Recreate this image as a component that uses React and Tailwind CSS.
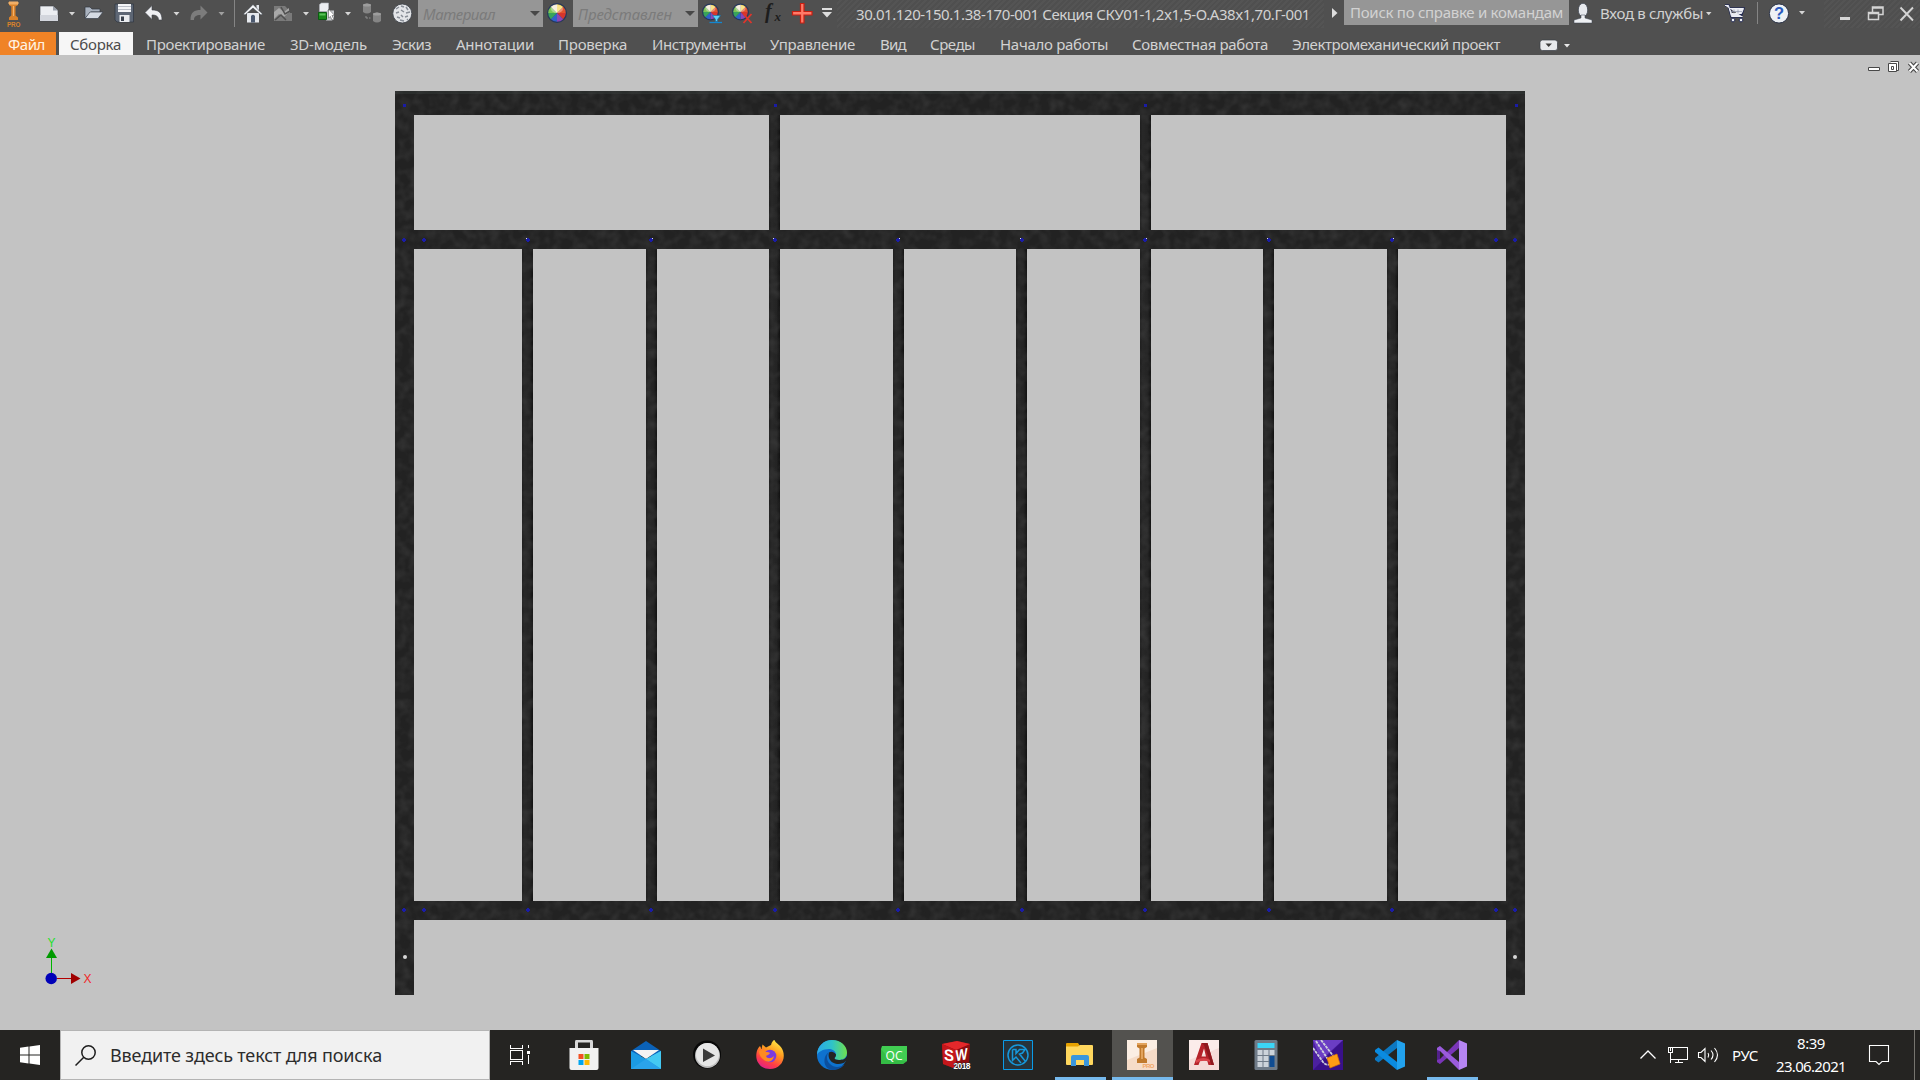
import React, { useLayoutEffect, useRef } from 'react';

const UI = "font-['Noto_Sans','Open_Sans',sans-serif]";

/* Single line of text whose tracking is adjusted to fill a given width. */
function FitText({ w, className = '', children }) {
  const box = useRef(null);
  useLayoutEffect(() => {
    const el = box.current;
    el.style.letterSpacing = '0px';
    const natural = el.getBoundingClientRect().width;
    const n = String(children).length;
    el.style.letterSpacing = (w - natural) / n + 'px';
  }, [w, children]);
  return (
    <span className={'block shrink-0 whitespace-pre ' + className} style={{ width: w }}>
      <span ref={box} className="inline-block">{children}</span>
    </span>
  );
}

/* Toolbar slot: a strip of the title bar drawn in window coordinates. */
function Slot({ x, w, h = 32, y = 0, children }) {
  return (
    <svg className="block shrink-0" width={w} height={h} viewBox={`${x} ${y} ${w} ${h}`}>
      {children}
    </svg>
  );
}

const Caret = ({ x, y = 12, s = 6, fill = '#d6d6d6' }) => (
  <path d={`M${x} ${y}h${s}l${-s / 2} ${s / 2 + 0.5}z`} fill={fill} />
);

const Ball = ({ cx, cy, r }) => {
  const cols = ['#f6d44a', '#e2542f', '#d6362c', '#8b46b5', '#2f62c9', '#38a35c', '#7cc455', '#f3ead0'];
  return (
    <g>
      <circle cx={cx} cy={cy} r={r} fill="#26375c" />
      {cols.map((c, i) => {
        const a = (i * Math.PI) / 4 - Math.PI / 2;
        const b = a + Math.PI / 4 + 0.02;
        const q = r - 1.2;
        return (
          <path
            key={i}
            fill={c}
            d={`M${cx} ${cy}L${cx + q * Math.cos(a)} ${cy + q * Math.sin(a)}A${q} ${q} 0 0 1 ${cx + q * Math.cos(b)} ${cy + q * Math.sin(b)}z`}
          />
        );
      })}
      <ellipse cx={cx} cy={cy - r * 0.4} rx={r * 0.6} ry={r * 0.4} fill="#fff" opacity=".35" />
    </g>
  );
};

function TitleBar() {
  return (
    <div className="flex h-8 w-full text-[15px] leading-5 text-[#d2d2d2]">
      <Slot x={0} w={34}>
        <path d="M9 2h9v3l-2.500 1.500v9l2.500 2V20H9v-2.500l2.300-2v-9L9 5z" fill="#d9822b" />
        <path d="M9 2h9v2H9zM13.500 6v10" fill="#f0ac62" stroke="#f3b26b" strokeWidth="1" />
        <text x="7" y="27" fontSize="6.300" fontWeight="700" textLength="13.500" fill="#d9822b" fontFamily="Liberation Sans, sans-serif">PRO</text>
      </Slot>
      <Slot x={34} w={46}>
        <path d="M40 6h13l5 4.500V21H40z" fill="#eceef2" stroke="#3c4048" strokeWidth=".6" />
        <path d="M40 15h18v6H40z" fill="#d3d6dd" />
        <path d="M53 6v4.500h5z" fill="#9aa0ab" />
        <Caret x={69} />
      </Slot>
      <Slot x={80} w={30}>
        <path d="M85 18V7h5l2 2h8v3h-9z" fill="#aab3c0" stroke="#30363f" strokeWidth=".7" />
        <path d="M85 18.500l5-6.500h13l-5 6.500z" fill="#d5dbe4" stroke="#3a414c" strokeWidth=".7" />
      </Slot>
      <Slot x={110} w={30}>
        <path d="M115 4h18.500v18H117l-2-2z" fill="#5d6674" stroke="#333a45" strokeWidth=".8" />
        <path d="M118 4h13v8h-13z" fill="#f3f4f6" />
        <path d="M118 6.500h13M118 9.500h13" stroke="#b9bdc5" />
        <path d="M119.500 15h10v7h-10z" fill="#e9ebee" />
        <path d="M121 16.500h3v4.500h-3z" fill="#39404c" />
      </Slot>
      <Slot x={140} w={46}>
        <path d="M145 12.500l7-7v4.500c6 0 10 2 10 10h-3.500c0-3.500-2-5-6.500-5v4.500z" fill="#f0f1f4" stroke="#3c4048" strokeWidth=".6" />
        <Caret x={173.500} />
      </Slot>
      <Slot x={186} w={54}>
        <path d="M207.500 12.500l-7-7v4.500c-6 0-10 2-10 10h3.500c0-3.500 2-5 6.500-5v4.500z" fill="#7c7c7c" />
        <Caret x={218.500} fill="#a0a0a0" />
        <path d="M234.500 0v27" stroke="#858585" />
      </Slot>
      <Slot x={240} w={28}>
        <path d="M247 13h12v9.500h-12z" fill="#e6e9ee" />
        <path d="M256.500 5h2.500v5h-2.500z" fill="#dfe2e8" />
        <path d="M243.500 14L253 4.500l9.500 9.500-1.500 1L253 8l-8 7z" fill="#f5f6f8" stroke="#333a46" strokeWidth=".5" />
        <path d="M251 16q2-2.500 4 0v6.500h-4z" fill="#4d5a70" />
      </Slot>
      <Slot x={268} w={46}>
        <path d="M274 6h11l5 5v2h2v8h-18z" fill="#7a7a7a" />
        <path d="M274 12l5-4 5 4 5-4v4l-5 5-5-3-5 5z" fill="#a8a8a8" />
        <path d="M281 7l4 7 5-3M275 20l6-5 5 5" stroke="#505050" strokeWidth="1.500" fill="none" />
        <Caret x={303} />
      </Slot>
      <Slot x={314} w={44}>
        <path d="M319.500 4.500l2-1.500h7v7l-2 1.500h-7z" fill="#eceef1" stroke="#b0b4ba" strokeWidth=".6" />
        <path d="M326 12l2-1.500h6V19l-2 1.500h-6z" fill="#c7cace" />
        <path d="M318.500 12.500h8v7h-8z" fill="#1b8a1b" stroke="#0a5d10" />
        <path d="M319.500 13.500h6v2h-6z" fill="#5bc35b" />
        <path d="M328.500 9l6 6.300-2.500.2 1.800 3.700-1.800.8-1.700-3.600-1.800 1.800z" fill="#fff" stroke="#444" strokeWidth=".5" />
        <Caret x={345} />
      </Slot>
      <Slot x={358} w={30}>
        <path d="M363 5q4-3 8 0v7q-4 3-8 0zM373 14q4-3 8 0v7q-4 3-8 0z" fill="#858585" />
        <ellipse cx="367" cy="5" rx="4" ry="1.500" fill="#9d9d9d" />
        <ellipse cx="377" cy="14" rx="4" ry="1.500" fill="#9d9d9d" />
        <path d="M366 16v2h2M369 18h1.500" stroke="#8e8e8e" fill="none" />
      </Slot>
      <Slot x={388} w={30}>
        <circle cx="402.300" cy="13.500" r="9.500" fill="#e3e5e8" stroke="#3b4047" strokeWidth=".8" />
        <path d="M396 9l3-2M401 6l3 1M406 7l2 3M396 13l3-1M401 10l3 2M406 13l4-1M397 17l3 1M401 15l2 2M405 17l3-1M400 20l4 1M407 20l1-1" stroke="#888e96" strokeWidth="1.500" fill="none" />
      </Slot>
      <div className="flex h-[27px] w-[125px] shrink-0 items-center bg-[#969696] pl-[5px] italic text-[#7b7b7b]">
        <FitText w={72}>Материал</FitText>
        <svg className="ml-[35px] block" width="10" height="6"><path d="M0 0h10l-5 5z" fill="#484848" /></svg>
      </div>
      <Slot x={543} w={30}><Ball cx={557} cy={13} r={10} /></Slot>
      <div className="flex h-[27px] w-[125px] shrink-0 items-center bg-[#969696] pl-[5px] italic text-[#7b7b7b]">
        <FitText w={94}>Представлен</FitText>
        <svg className="ml-[13px] block" width="10" height="6"><path d="M0 0h10l-5 5z" fill="#484848" /></svg>
      </div>
      <Slot x={698} w={30}>
        <Ball cx={710.500} cy={12} r={8.500} />
        <path d="M712.500 15.500h8l-3 4v2h-2v-2z" fill="#5fd0f5" stroke="#0c6fae" strokeWidth=".6" />
        <path d="M709.500 22.500h12.500" stroke="#1486cf" strokeWidth="1.300" />
      </Slot>
      <Slot x={728} w={32}>
        <Ball cx={740.500} cy={12} r={8.500} />
        <path d="M743.500 14l8 9M751.500 14l-8 9" stroke="#e0352c" strokeWidth="1.800" />
      </Slot>
      <Slot x={760} w={28}>
        <text x="765" y="18" fontSize="20" fontStyle="italic" fontWeight="700" fill="#1d1d1d" fontFamily="Liberation Serif, serif">f</text>
        <text x="774.500" y="21" fontSize="13" fontStyle="italic" fontWeight="700" fill="#1d1d1d" fontFamily="Liberation Serif, serif">x</text>
      </Slot>
      <Slot x={788} w={28}>
        <path d="M792.500 11.500h8v-8h3.500v8h8v3.500h-8v8h-3.500v-8h-8z" fill="#ff7a68" stroke="#c81f12" strokeWidth="1.200" />
      </Slot>
      <Slot x={816} w={21}>
        <path d="M822 8h10v2h-10zM822 12h10l-5 5.500z" fill="#dedede" />
      </Slot>
      <div className="flex h-[28px] w-[487px] shrink-0 items-start bg-[repeating-linear-gradient(135deg,#4f4f4f_0_2px,#545454_2px_4px)] pl-[19px] pt-[4px]">
        <FitText w={454}>30.01.120-150.1.38-170-001 Секция СКУ01-1,2x1,5-О.А38x1,70.Г-001</FitText>
      </div>
      <Slot x={1324} w={20}><path d="M1332 8v10l5.500-5z" fill="#dedede" /></Slot>
      <div className="flex h-[25px] w-[225px] shrink-0 items-start bg-[#969696] pl-[6px] pt-[2px]">
        <FitText w={213}>Поиск по справке и командам</FitText>
      </div>
      <Slot x={1569} w={31}>
        <ellipse cx="1583" cy="10" rx="4.700" ry="6.700" fill="#e8eaee" stroke="#39404d" strokeWidth=".7" />
        <path d="M1581 15h4v3l7 2v3h-18v-3l7-2z" fill="#eef0f3" stroke="#39404d" strokeWidth=".5" />
      </Slot>
      <FitText w={103} className="pt-[3px]">Вход в службы</FitText>
      <Slot x={1703} w={19}><Caret x={1706} y={12} s={5.500} /></Slot>
      <Slot x={1722} w={42}>
        <g transform="translate(-1 0)">
          <path d="M1726 5.500h3.500l3 11h11M1730.500 8.500h14l-2 6h-10z" fill="#e9ebf1" stroke="#242b52" strokeWidth="2.500" />
          <path d="M1726 5.500h3.500l3 11h11M1730.500 8.500h14l-2 5h-10z" fill="#e9ebf1" stroke="#eef0f5" strokeWidth="1" />
          <path d="M1735 9.500v4M1739 9.500v4M1732 11.500h11" stroke="#8e93aa" strokeWidth=".7" />
          <circle cx="1734" cy="20" r="1.900" fill="#eef0f5" stroke="#242b52" />
          <circle cx="1742" cy="20" r="1.900" fill="#eef0f5" stroke="#242b52" />
        </g>
        <path d="M1757.500 2v22" stroke="#858585" />
      </Slot>
      <Slot x={1764} w={60}>
        <circle cx="1779" cy="13.500" r="9.600" fill="#eef1f5" stroke="#2c3448" strokeWidth="1" />
        <text x="1779" y="19.300" textAnchor="middle" fontSize="16.500" fontWeight="700" fill="#2c5cc0" fontFamily="Liberation Sans, sans-serif">?</text>
        <Caret x={1799} y={11} />
      </Slot>
      <div className="flex h-[28px] w-24 shrink-0 bg-[repeating-linear-gradient(135deg,#4f4f4f_0_2px,#545454_2px_4px)]">
        <Slot x={1824} w={36} h={28}><path d="M1840 17h10v3h-10z" fill="#d4d4d4" /></Slot>
        <Slot x={1860} w={30} h={28}>
          <path d="M1872.500 12V7h10.500v7.500h-4M1872.500 8h10.500M1868.500 12.500h10v7h-10zM1868.500 13.500h10" fill="none" stroke="#d4d4d4" strokeWidth="1.500" />
        </Slot>
        <Slot x={1890} w={30} h={28}><path d="M1900.500 7.500l12.500 13M1913 7.500l-12.500 13" stroke="#d4d4d4" strokeWidth="1.900" /></Slot>
      </div>
    </div>
  );
}

const tabs = [
  ['Проектирование', 119, 'ml-[13px]'],
  ['3D-модель', 77, 'ml-[25px]'],
  ['Эскиз', 39, 'ml-[25px]'],
  ['Аннотации', 78, 'ml-[25px]'],
  ['Проверка', 69, 'ml-[24px]'],
  ['Инструменты', 94, 'ml-[25px]'],
  ['Управление', 85, 'ml-[24px]'],
  ['Вид', 26, 'ml-[25px]'],
  ['Среды', 45, 'ml-[24px]'],
  ['Начало работы', 108, 'ml-[25px]'],
  ['Совместная работа', 136, 'ml-[24px]'],
  ['Электромеханический проект', 208, 'ml-[24px]'],
];

function Ribbon() {
  return (
    <div className="flex h-[23px] w-full text-[15px] leading-[25px] text-[#d2d2d2]">
      <div className="h-full w-14 bg-[#f08326] pl-2 text-[#fff4e4]"><FitText w={37}>Файл</FitText></div>
      <div className="ml-[3px] h-full w-[74px] bg-[#f6f6f6] pl-[11px] text-[#4c4c4c]"><FitText w={51}>Сборка</FitText></div>
      {tabs.map(([t, w, m]) => (
        <div key={t} className={m}><FitText w={w}>{t}</FitText></div>
      ))}
      <div className="ml-[36px]">
        <Slot x={1536} w={44} y={32} h={23}>
          <rect x="1540" y="40" width="17.500" height="10.500" rx="2.500" fill="#e8eaed" stroke="#3b3f46" strokeWidth=".7" />
          <path d="M1545.500 43.500h6.500l-3.300 3.500z" fill="#3c3c3c" />
          <Caret x={1564} y={44} fill="#e8e8e8" />
        </Slot>
      </div>
    </div>
  );
}

const balusters = [522, 646, 769, 893, 1016, 1140, 1263, 1387];
const railDots = [404, 424, 528, 651, 775, 898, 1022, 1145, 1269, 1392, 1496, 1515];

function Viewport() {
  return (
    <div className="h-[975px] w-full bg-[#c3c3c3]">
      <svg className="block" width="1920" height="975" viewBox="0 55 1920 975">
        <defs>
          <linearGradient id="bar" x1="0" x2="1" y1="0" y2="0">
            <stop offset="0" stopColor="#1f1f1f" />
            <stop offset=".25" stopColor="#282828" />
            <stop offset=".7" stopColor="#232323" />
            <stop offset="1" stopColor="#111" />
          </linearGradient>
          <filter id="grain" x="0" y="0" width="1" height="1" colorInterpolationFilters="sRGB">
            <feTurbulence type="fractalNoise" baseFrequency=".1" numOctaves="2" seed="4" />
            <feColorMatrix values="0 0 0 0 .25  0 0 0 0 .25  0 0 0 0 .25  1.1 0 0 0 -.4" />
            <feComposite in2="SourceGraphic" operator="in" result="n" />
            <feMerge><feMergeNode in="SourceGraphic" /><feMergeNode in="n" /></feMerge>
          </filter>
        </defs>
        <g filter="url(#grain)" shapeRendering="crispEdges">
          <path fill="#222" d="M395 91h1130v904h-19V920H414v75h-19zM414 115v115h355v-115zM780 115v115h360v-115zM1151 115v115h355v-115zM414 249v652h108v-652zM533 249v652h113v-652zM657 249v652h112v-652zM780 249v652h113v-652zM904 249v652h112v-652zM1027 249v652h113v-652zM1151 249v652h112v-652zM1274 249v652h113v-652zM1398 249v652h108v-652z" fillRule="evenodd" />
          {balusters.map((x) => (
            <rect key={x} x={x} y="249" width="11" height="652" fill="url(#bar)" />
          ))}
          <rect x="769" y="115" width="11" height="115" fill="url(#bar)" />
          <rect x="1140" y="115" width="11" height="115" fill="url(#bar)" />
          <path d="M395 91h1130v3H395z" fill="#2a2d2c" />
        </g>
        <g fill="#1a1ca6" shapeRendering="crispEdges">
          {[404, 775, 1145, 1516].map((x) => <rect key={x} x={x - 1} y="104" width="3" height="3" />)}
          {[240, 910].map((y) => railDots.map((x) => (
            <path key={x + '-' + y} d={`M${x - 1} ${y - 2}h2v1h1v2h-1v1h-2v-1h-1v-2h1z`} />
          )))}
        </g>
        <g fill="#dcdcdc" shapeRendering="crispEdges">
          {[526, 652, 773, 899, 1020, 1146, 1267, 1393].map((x) => <rect key={x} x={x} y="238" width="1" height="1" />)}
        </g>
        <circle cx="405" cy="957" r="2" fill="#d8d8d8" />
        <circle cx="1515" cy="957" r="2" fill="#d8d8d8" />

        <path d="M51.500 958v15" stroke="#00b400" />
        <path d="M46 958l5.500-9.500L57 958z" fill="#009a00" />
        <path d="M57 978.500h14" stroke="#b40000" />
        <path d="M71 973v11l9.500-5.500z" fill="#a00000" />
        <circle cx="51.200" cy="978.500" r="5.700" fill="#0000b8" />
        <text x="51.500" y="947" textAnchor="middle" fontSize="12" fill="#22e02a" fontFamily="Liberation Sans, sans-serif">Y</text>
        <text x="87.500" y="983" textAnchor="middle" fontSize="12" fill="#f02828" fontFamily="Liberation Sans, sans-serif">X</text>

        <g fill="#fff" stroke="#484848" strokeWidth="1">
          <path d="M1868.500 67.500h11v3h-11z" />
          <path d="M1890.500 61.500h8v9h-3" />
          <path d="M1888.500 63.500h8v8h-8z" />
          <path d="M1891.500 66.500h2v3h-2z" />
        </g>
        <path d="M1909.500 63l8 8.500M1917.500 63l-8 8.500" stroke="#484848" strokeWidth="4.200" />
        <path d="M1909.500 63l8 8.500M1917.500 63l-8 8.500" stroke="#fff" strokeWidth="2" />
      </svg>
    </div>
  );
}

/* Taskbar icons, each on a 30 by 30 field. */
const Store = () => (
  <>
    <path d="M7.500 12V2q0-1 1-1h13q1 0 1 1v10" fill="none" stroke="#d8d8d8" strokeWidth="3" />
    <path d="M.5 8h29v20q0 2-2 2h-25q-2 0-2-2z" fill="#f1f1f1" />
    <path d="M9.500 14h5v5h-5z" fill="#f25022" /><path d="M15.500 14h5v5h-5z" fill="#7fba00" />
    <path d="M9.500 20h5v5h-5z" fill="#00a4ef" /><path d="M15.500 20h5v5h-5z" fill="#ffb900" />
  </>
);
const Mail = () => (
  <>
    <path d="M0 11L15 1l15 10v5H0z" fill="#0b62b8" />
    <path d="M2 10h26L15 19z" fill="#f3f3f3" />
    <path d="M0 11l15 8 15-8v18H0z" fill="#1b9be4" />
    <path d="M30 11v18L15 19z" fill="#44c9f2" />
    <path d="M0 29l15-10 15 10z" fill="#2aa3ea" />
  </>
);
const Play = () => (
  <>
    <circle cx="14" cy="14.500" r="14" fill="#080808" />
    <circle cx="14.500" cy="15.500" r="12.500" fill="#bdbdbd" />
    <circle cx="14.500" cy="14.500" r="11.500" fill="#e6e6e6" />
    <path d="M10 8.500v13.500l12-6.500z" fill="#3b3b3b" />
  </>
);
const Firefox = () => (
  <>
    <defs>
      <linearGradient id="ff" x1=".8" y1="0" x2=".3" y2="1">
        <stop offset="0" stopColor="#fff14a" /><stop offset=".4" stopColor="#ff9a1f" /><stop offset=".75" stopColor="#ff3d45" /><stop offset="1" stopColor="#e0208a" />
      </linearGradient>
    </defs>
    <path d="M16 5c.5-3 2.500-5 3.500-5 .5 3 7 5 8.500 11 3 9-3 18-13 18C6 29 0 22 1.500 13c.4-3 1.500-5 3.500-7l1.500 3 1-4.500 3.500 3z" fill="url(#ff)" />
    <circle cx="15" cy="16" r="6.300" fill="#7a3be0" />
    <path d="M4 11c3-2 6-1 7 1 2 0 3 0 4 1-1 2-3 2-4 3 1 3 5 3 8 0-1 6-6 7-10 4-3-2-5-5-5-9z" fill="#ff8a22" />
  </>
);
const Edge = () => (
  <>
    <defs>
      <linearGradient id="e1" x1="0" y1=".5" x2="1" y2=".5">
        <stop offset="0" stopColor="#2aa8ea" /><stop offset=".5" stopColor="#2fc3c8" /><stop offset="1" stopColor="#6fe04e" />
      </linearGradient>
    </defs>
    <circle cx="15" cy="15" r="15" fill="#0e72cf" />
    <path d="M0 15C0 6 7 0 15 0c9 0 15 6 15 12.500 0 4.500-3 7.500-8 7.500-3 0-4.500-1-4.500-2 1-1 1.500-2 1.500-3.500 0-3-3-5.500-7-5.500-6 0-11 3-12 6z" fill="url(#e1)" />
    <path d="M12 12c-3 3-2.500 9 1 12 4 4 10 3.500 14.500.5-2.500 3.500-7 5.500-12.500 5.500-6-1-8-6-7.500-10.500.2-3 2-6 4.500-7.500z" fill="#0b4f9e" />
    <path d="M12 12.500c-1.500 5 1 10.500 8 11.500 4 .4 7-1 8-2l2.500-3v4l-2.800 1.500C31 20 31 17 30.500 15c-2 5-5 5-8.500 5-3 0-4.500-1-4.500-2 1-1 1.500-2 1.500-3.500-2-3-5-3.500-7-2z" fill="#252422" />
  </>
);
const QC = () => (
  <>
    <path d="M3 6h25v15l-4 3H2V9z" fill="#41cd52" />
    <path d="M2 24V9l9 11 17 1-4 3z" fill="#2bb03d" opacity=".6" />
    <text x="15" y="19.500" textAnchor="middle" fontSize="13" textLength="17" lengthAdjust="spacingAndGlyphs" fill="#fff" fontFamily="Open Sans, sans-serif">QC</text>
  </>
);
const SW = () => (
  <>
    <path d="M1 4L16 1l13 3-1 20-13 5-13-5z" fill="#8f0d10" />
    <path d="M1 4L16 1l13 3-14 6z" fill="#e5282b" />
    <path d="M1 4l14 6v19L2 24z" fill="#c4171b" />
    <g fill="#fff" fontFamily="Liberation Sans, sans-serif" fontWeight="700">
      <text transform="translate(3 20) skewY(8)" fontSize="16" textLength="10" lengthAdjust="spacingAndGlyphs">S</text>
      <text transform="translate(14.500 21.500) skewY(-12)" fontSize="16" textLength="12" lengthAdjust="spacingAndGlyphs">W</text>
      <text x="12.500" y="28.600" fontSize="8.500" textLength="17" stroke="#222" strokeWidth="1" paintOrder="stroke">2018</text>
    </g>
  </>
);
const Kompas = () => (
  <>
    <path d="M.5.500h29v29H.5z" fill="#26333b" stroke="#0a9be8" />
    <g fill="none" stroke="#1698dc" strokeWidth="1.500">
      <circle cx="15" cy="15" r="10" />
      <path d="M9.500 9.500h3.500v4l3.500-4H22l-2.500 3.500-3 1 6 7.500M9.500 9.500v11l3.500-3.500 5 6" />
    </g>
  </>
);
const Explorer = () => (
  <>
    <path d="M1 4q0-1 1-1h11l2 3v4H1z" fill="#e6a100" />
    <path d="M1 6.500h12l2-1.500h12q1 0 1 1v18q0 1-1 1H2q-1 0-1-1z" fill="#ffd75e" />
    <path d="M6 26v-9q0-2 2-2h14q2 0 2 2v9h-5v-6h-8v6z" fill="#3a96dd" />
  </>
);
const Inventor = () => (
  <>
    <path d="M0 0h30v30H0z" fill="#fbeee3" /><path d="M0 20L30 8v22H0z" fill="#f6dcc8" />
    <path d="M10 3h10v4l-2.500 1.500v9L20 19v4H10v-4l2.500-1.500v-9L10 7z" fill="#c17a2c" />
    <path d="M10 3h10v2H10zM14 8h2v11h-2z" fill="#e2a35c" />
    <text x="15.500" y="28" fontSize="6" fontWeight="700" textLength="12" fill="#f2a766" fontFamily="Liberation Sans, sans-serif">PRO</text>
  </>
);
const Acad = () => (
  <>
    <path d="M0 0h30v30H0z" fill="#fbecea" /><path d="M0 20L30 8v22H0z" fill="#f5dbd8" />
    <path d="M5 25L12.500 3h6L25 25h-5.500l-1.300-4.500h-7L9.500 25zM12.500 16.500h4.500L15 8.500z" fill="#b5222a" fillRule="evenodd" />
    <path d="M12.500 3h6L25 25h-2.500L15 5z" fill="#8e181e" />
    <path d="M7 20q8-4 14 0v2q-7-3-14 1z" fill="#d9434a" />
  </>
);
const Calc = () => (
  <>
    <rect x="3.500" width="23" height="30" rx="1.500" fill="#6f7b88" />
    <path d="M6.500 3h17v5h-17z" fill="#3bd5f7" />
    <path d="M6.500 10h5v5h-5zM12.500 10h5v5h-5zM18.500 10h5v5h-5zM6.500 16h5v5h-5zM12.500 16h5v5h-5zM6.500 22h5v5h-5zM12.500 22h5v5h-5z" fill="#ccd3da" />
    <path d="M18.500 16h5v11h-5z" fill="#0f4c92" />
  </>
);
const Lock = () => (
  <>
    <path d="M0 0h30v30H0z" fill="#4b20a0" /><path d="M30 0v30H0z" fill="#39108a" /><path d="M0 0h30L8 20z" fill="#6b3dc4" />
    <path d="M3 1l11 17q3 4 4 0M8 0l13 17M0 8l10 14q4 5 8 1" fill="none" stroke="#cfcfdc" strokeWidth="1.800" strokeDasharray="3 .8" />
    <path d="M14 18l10-4 3 10-10 4z" fill="#ff9c14" stroke="#d97400" strokeWidth=".7" />
  </>
);
const Code = () => (
  <>
    <path d="M22 0l8 3.500v23L22 30z" fill="#22a2ee" />
    <path d="M22 0v8L3.500 22.500 0 20v-2z" fill="#0c78c2" />
    <path d="M22 30v-8L3.500 7.500 0 10v2z" fill="#0a8be0" />
  </>
);
const VStudio = () => (
  <>
    <path d="M0 8l3-2v18l-3-2z" fill="#52218a" />
    <path d="M22 0v8L3 24l-3-2v-2l3-1z" fill="#7a35b8" />
    <path d="M22 30v-8L3 6 0 8v2l3 1z" fill="#9a5bdc" />
    <path d="M22 0l8 3.500v23L22 30z" fill="#b685f3" />
  </>
);

const apps = [
  [Store], [Mail], [Play], [Firefox], [Edge], [QC], [SW], [Kompas], [Explorer, 'open'],
  [Inventor, 'active'], [Acad], [Calc], [Lock], [Code], [VStudio, 'open'],
];

function Taskbar() {
  return (
    <div className="flex h-[50px] w-full bg-[#252422] text-white">
      <div className="flex w-[60px] items-center justify-center">
        <svg width="20" height="20"><path d="M0 2.800L8.500 1.600V9.500H0zM9.500 1.400L20 0v9.500H9.500zM0 10.500h8.500v8L0 17.200zM9.500 10.500H20V20L9.500 18.600z" fill="#fff" /></svg>
      </div>
      <div className="flex w-[430px] items-center border border-[#b4b4b4] bg-[#f1f1f1] pl-[14px] text-[#2c2c2c]">
        <svg width="21" height="21" fill="none" stroke="#1e1e1e" strokeWidth="1.500"><circle cx="13.500" cy="7.500" r="6.700" /><path d="M8.800 12.300L.5 20.500" /></svg>
        <FitText w={272} className="ml-[14px] text-[18px] leading-6">Введите здесь текст для поиска</FitText>
      </div>
      <div className="flex w-[63px] items-center pl-5">
        <svg width="21" height="20" fill="none" stroke="#fff" strokeWidth="1" shapeRendering="crispEdges">
          <path d="M.5 0v3.500h12V0M.5 5.500h12v9H.5zM.5 20v-3.500h12V20M18.500 0v3M18.500 10v9" />
          <path d="M17 6h3v3h-3z" fill="#fff" stroke="none" />
        </svg>
      </div>
      {apps.map(([Icon, state], i) => (
        <div key={i} className={'flex w-[62px] shrink-0 flex-col items-center pt-[10px] ' + (state === 'active' ? 'bg-[linear-gradient(90deg,transparent_1px,#53524f_1px)]' : '')}>
          <svg width="30" height="30" viewBox="0 0 30 30"><Icon /></svg>
          {state && <div className={'mt-[7px] h-[3px] bg-[#76b9ed] ' + (state === 'active' ? 'w-[61px] self-end' : 'w-[51px]')} />}
        </div>
      ))}
      <div className="ml-auto flex w-[280px] items-center text-[15px] leading-5">
        <svg width="92" height="50" viewBox="1640 1030 92 50" fill="none" stroke="#fff" className="shrink-0">
          <path d="M1640.500 1058.500l7.500-7.500 7.500 7.500" strokeWidth="1.300" />
          <path d="M1672 1047.500h15v12h-17M1670.500 1053v9.500M1678.500 1060v2.500M1674.500 1062.500h8M1668.500 1047.500h4v5h-4zM1670.500 1048v3" shapeRendering="crispEdges" />
          <path d="M1698.500 1052.500h2.500l4-4v13l-4-4h-2.500zM1708 1053q1.500 2 0 4.500M1711 1050.500q4 4.500 0 9M1714.500 1048q6 7 0 14" strokeWidth="1.100" />
        </svg>
        <FitText w={26}>РУС</FitText>
        <div className="ml-[18px] flex w-[70px] shrink-0 flex-col items-center gap-[3px] pb-[2px]">
          <FitText w={28}>8:39</FitText>
          <FitText w={70}>23.06.2021</FitText>
        </div>
        <svg width="74" height="50" viewBox="1846 1030 74 50" fill="none" stroke="#fff" className="shrink-0">
          <path d="M1869.500 1045.500h19v16h-6.500l-3 3-3-3h-6.500z" strokeWidth="1.100" />
          <path d="M1914.500 1030v50" stroke="#77756f" />
        </svg>
      </div>
    </div>
  );
}

export default function App() {
  return (
    <div className={'h-[1080px] w-[1920px] overflow-hidden bg-[#505050] ' + UI}>
      <TitleBar />
      <Ribbon />
      <Viewport />
      <Taskbar />
    </div>
  );
}
